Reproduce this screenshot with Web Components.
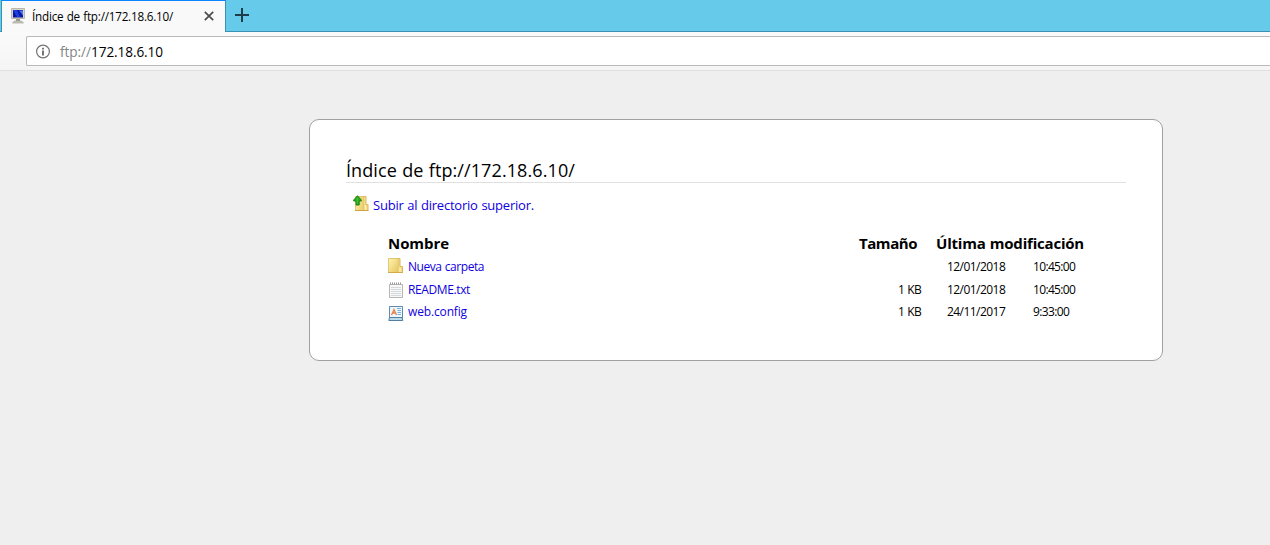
<!DOCTYPE html>
<html lang="es">
<head>
<meta charset="utf-8">
<title>Índice de ftp://172.18.6.10/</title>
<style>
body{margin:0;background:#efefef;font-family:"Open Sans","Noto Sans",sans-serif;color:#000;overflow:hidden}
</style>
</head>
<body>
<ftp-browser></ftp-browser>
<script>
const define=(name,html,init)=>{
  const t=document.createElement('template');t.innerHTML=html;
  customElements.define(name,class extends HTMLElement{
    constructor(){super();this.attachShadow({mode:'open'}).append(t.content.cloneNode(true));}
    connectedCallback(){if(init)init(this);}
  });
};

// Text label whose letter-spacing is tuned to occupy a given width.
define('fit-text',`<style>:host{display:inline-block;white-space:pre;flex:none;word-spacing:.5px}span{display:inline-block}</style><span><slot></slot></span>`,el=>{
  const s=el.shadowRoot.querySelector('span'),w=+el.getAttribute('width');
  const n=[...el.textContent].length;
  s.style.letterSpacing=(w-s.getBoundingClientRect().width)/n+'px';
  el.style.width=w+'px';
});

const icons={
computer:`<svg width="16" height="17" viewBox="0 0 16 17"><path d="M.500 1.500h13v10h-13z" fill="#d8d4c8" stroke="#b9b6ab"/><path d="M2 3h10v7.500H2z" fill="#0719a8"/><path d="M2 3h4l3 7H6z" fill="#1c3fdd"/><path d="M8 3.500h4v5z" fill="#5276ee"/><path d="M5 12h4v2H5z" fill="#99968d"/><path d="M1.500 16l2-2h7l2 2z" fill="#c9c6bb" stroke="#a5a299" stroke-width=".7"/></svg>`,
folder:`<svg width="16" height="17" viewBox="0 0 16 17"><defs><linearGradient id="g" x1="0" y1="0" x2="1" y2="1"><stop stop-color="#fff3b0"/><stop offset="1" stop-color="#e8c760"/></linearGradient></defs><path d="M9.500 1.500H12v8h2.500v6h-5z" fill="#f2d983" stroke="#d9b95c"/><path d="M.500 1.500h9.500v14h-9.500z" fill="url(#g)" stroke="#e2c673"/><path d="M12 10.500v4.500" stroke="#fff6c4"/><path d="M0 15.500h15" stroke="#d3aa48"/></svg>`,
up:`<svg width="16" height="17" viewBox="0 0 16 17"><defs><linearGradient id="g"><stop stop-color="#f8e496"/><stop offset="1" stop-color="#ecce70"/></linearGradient></defs><path d="M9.500 1.500H13v8h2v6H9.500z" fill="#f5dc82" stroke="#d9b95c"/><path d="M2.500 1.500h8v14h-8z" fill="url(#g)" stroke="#e2c673"/><path d="M12.500 10v5" stroke="#fff6c4"/><path d="M2 15.500h13.500" stroke="#cea23a"/><path d="M4.500.7L8.300 5v1H6.200v4H3V6H.7V5z" fill="#28ab20" stroke="#14800f" stroke-width=".9"/><path d="M4.200 2.500v6" stroke="#4fc43c"/></svg>`,
text:`<svg width="16" height="17" viewBox="0 0 16 17"><path d="M1.500 2.500h13v13H1.500z" fill="#f8f8f8" stroke="#b5b5b5"/><path d="M2 1.500h12" stroke="#999" stroke-width="2" stroke-dasharray="1 1"/><path d="M3 5.500h10M3 7.500h10M3 9.500h10M3 11.500h10M3 13.500h10" stroke="#d5d8da"/></svg>`,
config:`<svg width="16" height="17" viewBox="0 0 16 17"><path d="M1.500 1.500h13v12h-13z" fill="#edf7fc" stroke="#5d8aad"/><path d="M1.500 12.500h12.500l.8 3H.8z" fill="#b9dcef" stroke="#527fa2"/><path d="M3.500 10l2.500-5.500L8.500 10M4.500 8h3" fill="none" stroke="#e5804f" stroke-width="1.300"/><path d="M9 3.500H13M9.500 5.500H13M9.500 7.500H13M9.500 9.500H13" stroke="#72b2db"/></svg>`,
info:`<svg width="15" height="15" viewBox="0 0 15 15"><circle cx="7" cy="7.500" r="6.400" fill="none" stroke="#737373" stroke-width="1.200"/><path d="M6.100 6.500h1.800v5H6.100zM6.100 3.700h1.800v1.700H6.100z" fill="#666"/></svg>`,
close:`<svg width="10" height="10" viewBox="0 0 10 10"><path d="M.8.8l8.400 8.400M9.200.8L.8 9.200" stroke="#4b4b4b" stroke-width="1.700"/></svg>`,
plus:`<svg width="14" height="14" viewBox="0 0 14 14"><path d="M7 0v14M0 7h14" stroke="#1e3d49" stroke-width="2"/></svg>`
};
define('ui-icon',`<style>:host{display:block;flex:none;line-height:0}svg{display:block}</style>`,el=>{
  el.shadowRoot.innerHTML+=icons[el.getAttribute('name')];
});

define('tab-strip',`<style>
:host{display:flex;height:32px;box-sizing:border-box;background:#66caeb;border-bottom:1px solid #3a91b3}
.tab{display:flex;align-items:center;box-sizing:border-box;width:225px;height:32px;margin-left:1px;border-left:1px solid #3a91b3;border-right:1px solid #3a91b3;border-top:1px solid #0a84ff;background:#f9f9f9;padding-left:9px;font-size:11.7px}
ui-icon{margin-top:-2px}
fit-text{margin:-1px 0 0 5px;line-height:18px}
.x{margin-left:31px}.plus{margin:8px 0 0 9px}
</style><div class="tab"><ui-icon name="computer"></ui-icon><fit-text width="141">Índice de ftp://172.18.6.10/</fit-text><ui-icon class="x" name="close"></ui-icon></div><ui-icon class="plus" name="plus"></ui-icon>`);

define('address-bar',`<style>
:host{display:flex;box-sizing:border-box;height:39px;padding:4px 0 4px 26px;background:linear-gradient(#fafafa,#f5f5f5);border-bottom:1px solid #e0e0e0}
.field{display:flex;flex:1;align-items:center;box-sizing:border-box;height:30px;border:1px solid #b9b9b9;border-right:0;border-radius:2px 0 0 2px;background:#fff;padding-left:9px;font-size:13.6px;line-height:20px}
fit-text{margin-top:2px}
.p{margin-left:9px;color:#858585}
</style><div class="field"><ui-icon name="info"></ui-icon><fit-text class="p" width="31">ftp://</fit-text><fit-text width="72">172.18.6.10</fit-text></div>`);

define('parent-link',`<style>
:host{display:flex;align-items:flex-start;height:17px;padding:13px 0 0 8px;color:#1000e0;font-size:13px;line-height:18px}
ui-icon{margin:-1px 1px 0 -1px}
fit-text{margin:0 0 0 3px}
</style><ui-icon name="up"></ui-icon><fit-text width="161">Subir al directorio superior.</fit-text>`);

define('file-row',`<style>
:host{display:grid;grid-template-columns:487px 46px 26px 86px 52px;height:22.6px;align-items:center;font-size:12px;line-height:16px}
.name{display:flex;align-items:center;color:#1000e0;gap:4px}
ui-icon{margin-top:2px}:host([icon="folder"]) ui-icon{margin-top:-3px}
.size{justify-self:end}.date{grid-column:4}.time{grid-column:5}
</style><div class="name"></div><div class="size"></div><div class="date"></div><div class="time"></div>`,el=>{
  const a=n=>el.getAttribute(n),q=c=>el.shadowRoot.querySelector(c);
  const [nw,tw]=a('widths').split(' ');
  q('.name').innerHTML=`<ui-icon name="${a('icon')}"></ui-icon><fit-text width="${nw}">${a('name')}</fit-text>`;
  if(a('size'))q('.size').innerHTML=`<fit-text width="23">${a('size')}</fit-text>`;
  q('.date').innerHTML=`<fit-text width="58.200">${a('date')}</fit-text>`;
  q('.time').innerHTML=`<fit-text width="${tw}">${a('time')}</fit-text>`;
});

define('file-list',`<style>
:host{display:block;padding:20px 0 0 42px}
.head{display:grid;grid-template-columns:471px 77px auto;height:23px;line-height:20px;font-size:15px;font-weight:700}
</style><div class="head"><fit-text width="61">Nombre</fit-text><fit-text width="58">Tamaño</fit-text><fit-text width="148">Última modificación</fit-text></div><slot></slot>`);

define('directory-card',`<style>
:host{display:block;box-sizing:border-box;width:854px;height:242px;margin:48px 0 0 309px;padding:36px;border:1px solid #a0a0a0;border-radius:10px;background:#fff}
h1{box-sizing:border-box;height:27px;margin:0;border-bottom:1px solid #e0e0e0;font-size:18px;font-weight:400;line-height:28px}
</style><h1><fit-text width="229">Índice de ftp://172.18.6.10/</fit-text></h1><slot></slot>`);

define('ftp-browser',`<style>:host{display:block;height:545px}</style>
<tab-strip></tab-strip><address-bar></address-bar>
<directory-card><parent-link></parent-link><file-list>
<file-row icon="folder" name="Nueva carpeta" widths="76 42.200" date="12/01/2018" time="10:45:00"></file-row>
<file-row icon="text" name="README.txt" widths="62 42.200" size="1 KB" date="12/01/2018" time="10:45:00"></file-row>
<file-row icon="config" name="web.config" widths="59 36.200" size="1 KB" date="24/11/2017" time="9:33:00"></file-row>
</file-list></directory-card>`);
</script>
</body>
</html>
